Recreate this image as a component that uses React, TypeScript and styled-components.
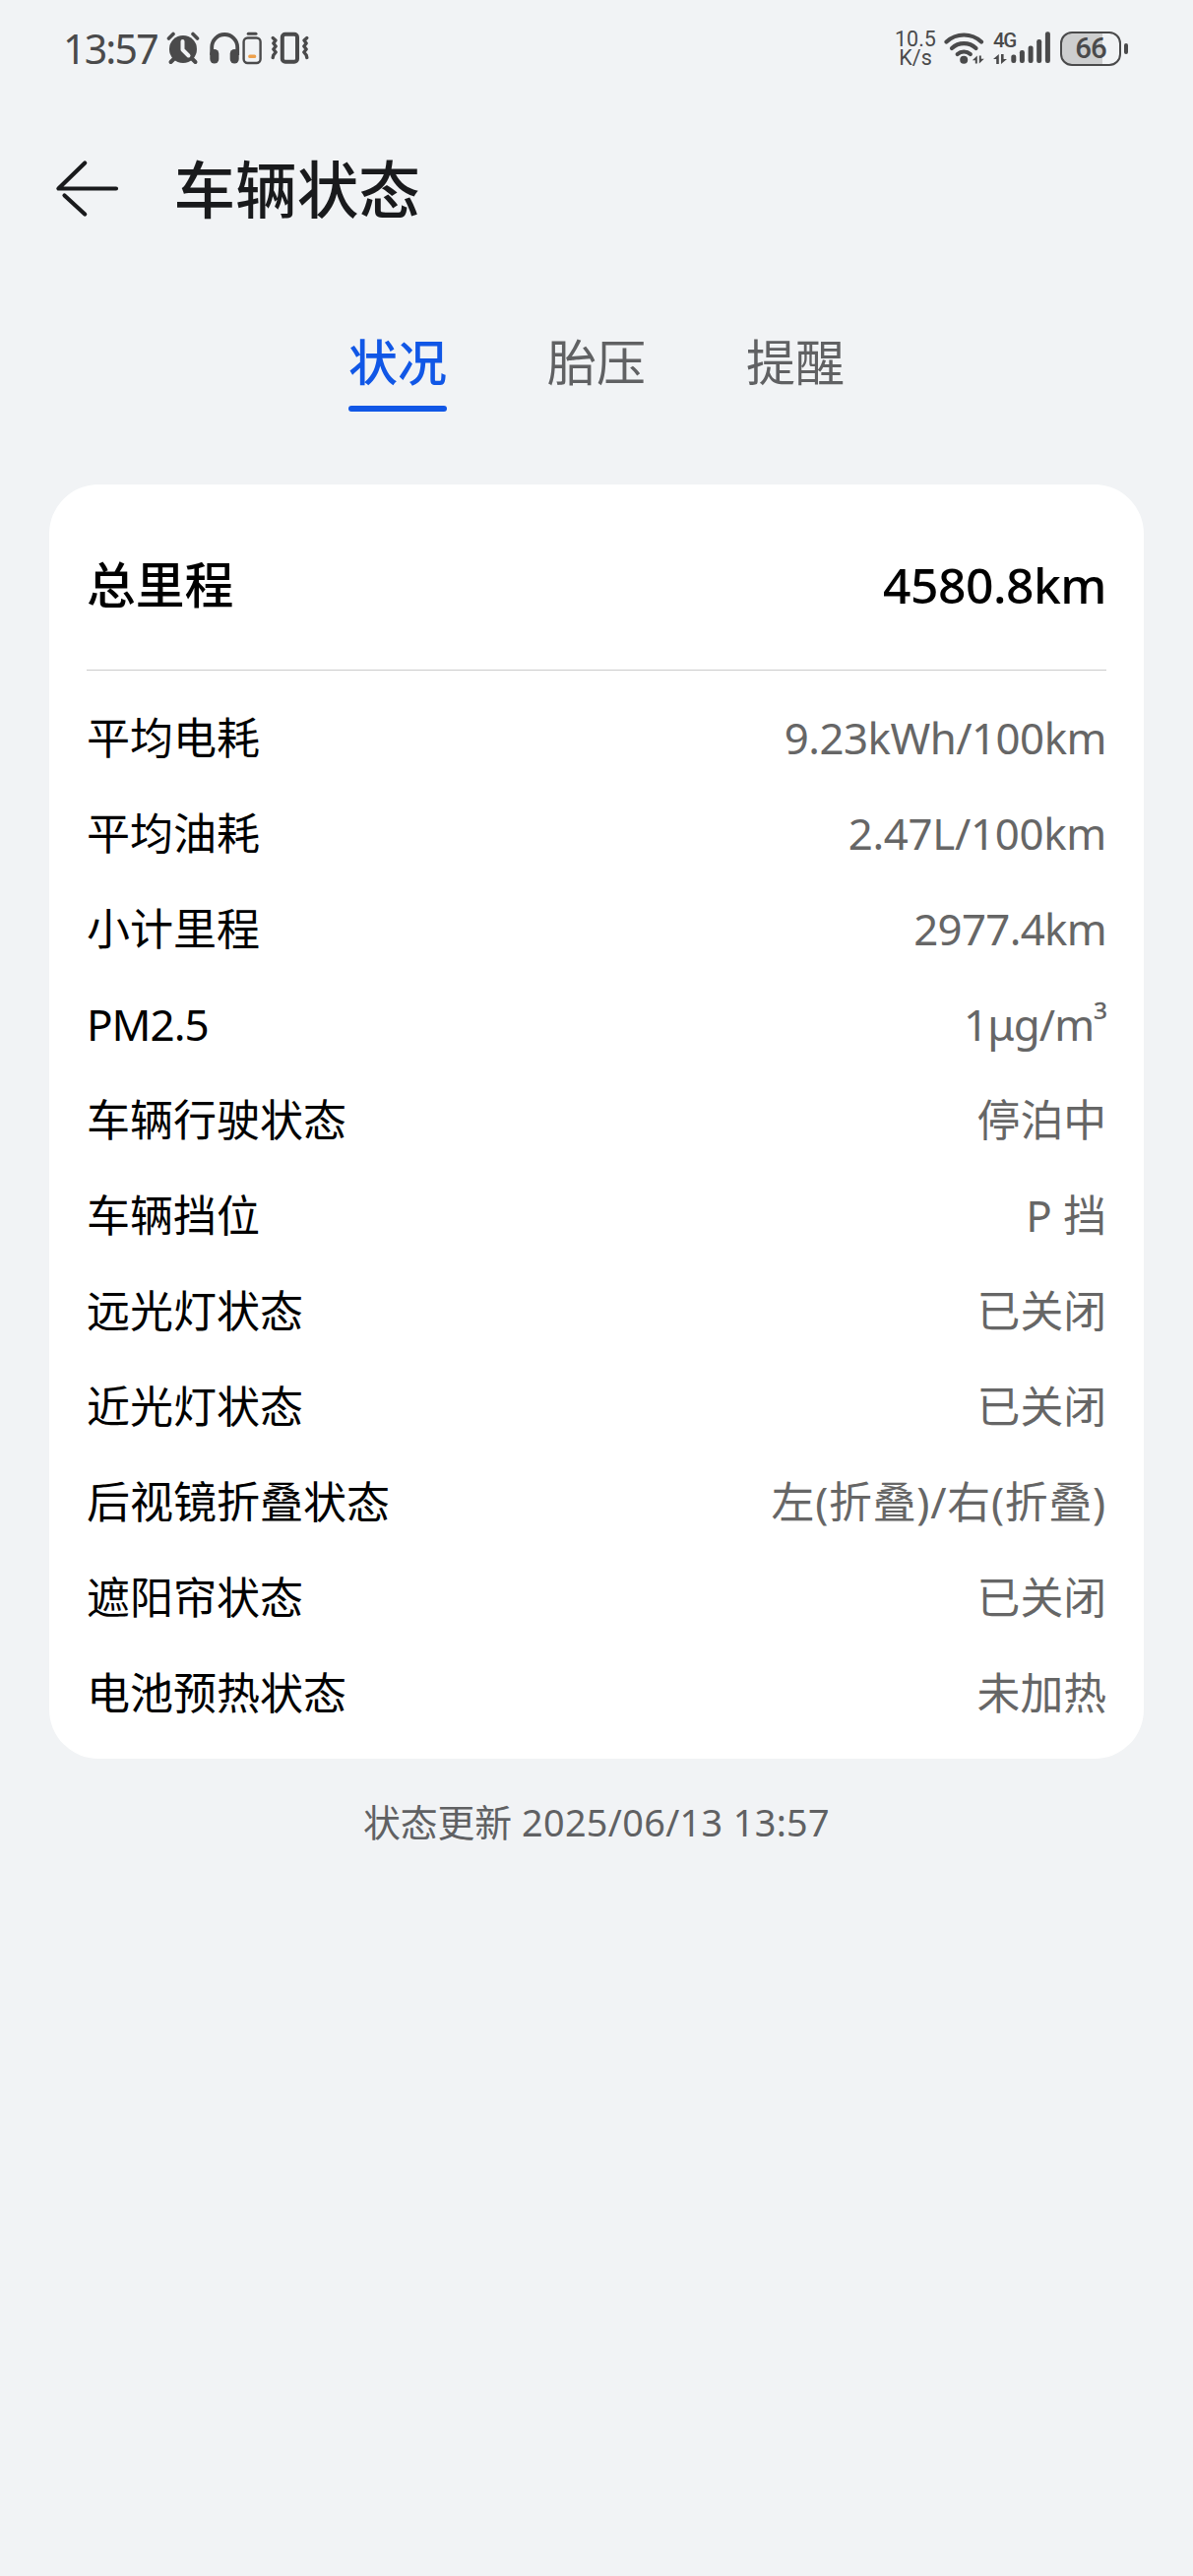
import React from "react";
import styled, { createGlobalStyle } from "styled-components";

const GlobalStyle = createGlobalStyle`
  * { box-sizing: border-box; }
  body {
    margin: 0;
    background: #f1f3f5;
    font-family: "Noto Sans", "Noto Sans CJK SC", sans-serif;
  }
`;

const Screen = styled.main`
  width: 1212px;
  height: 2616px;
  background: #f1f3f5;
  display: flex;
  flex-direction: column;
`;

const StatusBar = styled.header`
  height: 100px;
  padding: 0 66px 0 64px;
  display: flex;
  justify-content: space-between;
  color: #4a4a4b;
`;

const StatusGroup = styled.div`
  display: flex;
  align-items: center;
  height: 98px;
`;

const Clock = styled.span`
  width: 105px;
  font-size: 41px;
  line-height: 98px;
  letter-spacing: -1.8px;
  white-space: nowrap;
`;

const Glyph = styled.svg<{ $gap?: number }>`
  display: block;
  flex: none;
  margin-left: ${(p) => p.$gap ?? 0}px;
`;

const Speed = styled.div`
  display: flex;
  flex-direction: column;
  align-items: center;
  width: 44px;
  font-family: Roboto, sans-serif;
  font-size: 21.5px;
  line-height: 19px;
`;

const Network = styled.div`
  display: flex;
  flex-direction: column;
  width: 24px;
  height: 34px;
  margin-left: 8px;
  justify-content: space-between;
`;

const NetworkType = styled.span`
  font-family: Roboto, sans-serif;
  font-weight: 500;
  font-size: 20.5px;
  line-height: 18px;
  letter-spacing: -1.3px;
`;

const Battery = styled.div`
  width: 62px;
  height: 35px;
  margin-left: 9px;
  border: 2.5px solid #4a4a4b;
  border-radius: 12px;
  background: linear-gradient(to right, #cdcecf 0 70%, #f1f3f5 70%);
  display: flex;
  align-items: center;
  justify-content: center;
  font-family: Roboto, sans-serif;
  font-size: 29.5px;
  font-weight: 500;
  line-height: 30px;
  letter-spacing: -1px;
`;

const BatteryTip = styled.span`
  width: 4px;
  height: 11px;
  margin-left: 3px;
  border-radius: 2px;
  background: #4a4a4b;
`;

const TitleBar = styled.div`
  height: 184px;
  padding-left: 56px;
  display: flex;
  align-items: center;
`;

const BackButton = styled.button`
  width: 120.5px;
  height: 64px;
  padding: 0;
  border: 0;
  background: none;
  display: flex;
  align-items: center;
`;

const Title = styled.h1`
  margin: 0;
  font-size: 62.6px;
  line-height: 90px;
  font-weight: 500;
  color: #191a1c;
`;

const Tabs = styled.nav`
  display: flex;
  justify-content: center;
  gap: 102px;
  height: 208px;
  padding-top: 40px;
`;

const Tab = styled.button<{ $active?: boolean }>`
  height: 98px;
  padding: 4px 0 0;
  border: 0;
  background: none;
  font: inherit;
  font-size: 50px;
  line-height: 80px;
  font-weight: ${(p) => (p.$active ? 500 : 400)};
  color: ${(p) => (p.$active ? "#1157e6" : "#606163")};
  display: flex;
  flex-direction: column;
  justify-content: flex-start;
  white-space: nowrap;

  &::after {
    content: "";
    width: 100px;
    height: 6px;
    margin-top: 4px;
    flex: none;
    border-radius: 3px;
    background: ${(p) => (p.$active ? "#1157e6" : "transparent")};
  }
`;

const Card = styled.section`
  margin: 0 50px;
  height: 1294px;
  padding: 0 38px;
  border-radius: 50px;
  background: #fff;
`;

const TotalRow = styled.div`
  height: 189px;
  padding-top: 15px;
  border-bottom: 1px solid #cccccc;
  display: flex;
  align-items: center;
  justify-content: space-between;
  font-size: 49.8px;
  line-height: 72px;
  font-weight: 500;
  color: #000;
`;

const TotalValue = styled.span`
  letter-spacing: -0.5px;
`;

const Rows = styled.dl`
  margin: 0;
  padding-top: 19px;
`;

const Row = styled.div`
  height: 97px;
  display: flex;
  align-items: center;
  justify-content: space-between;
`;

const Label = styled.dt<{ $track?: number }>`
  font-size: 44px;
  line-height: 64px;
  letter-spacing: ${(p) => p.$track ?? 0}px;
  color: #000;
`;

const Value = styled.dd<{ $track?: number }>`
  margin: 0;
  font-size: 43.8px;
  line-height: 64px;
  letter-spacing: ${(p) => p.$track ?? 0}px;
  color: #666;
`;

const Exponent = styled.span`
  font-size: 39px;
  line-height: 1;
  vertical-align: 6px;
`;

const Updated = styled.p`
  margin: 0;
  padding-top: 37px;
  text-align: center;
  font-size: 37.8px;
  line-height: 56px;
  color: #606163;
`;

const Stamp = styled.span`
  letter-spacing: 0.35px;
`;

const ink = "#4a4a4b";

const AlarmIcon = () => (
  <Glyph width="34" height="34" viewBox="0 0 34 34">
    <circle cx="17" cy="18" r="14" fill={ink} />
    <path d="M2.500 7 7 2.500M31.500 7 27 2.500" stroke={ink} strokeWidth="3.600" strokeLinecap="round" />
    <path d="M7.500 28 4.500 31M26.500 28l3 3" stroke={ink} strokeWidth="4" strokeLinecap="round" />
    <path d="M16.500 10v8.500l6 6" fill="none" stroke="#f1f3f5" strokeWidth="4" strokeLinecap="round" strokeLinejoin="round" />
  </Glyph>
);

const HeadphonesIcon = () => (
  <Glyph $gap={10} width="31" height="34" viewBox="0 0 31 34">
    <path d="M2.200 24v-8a13 13 0 0 1 26 0v8" fill="none" stroke={ink} strokeWidth="3.800" />
    <rect x="0.300" y="18" width="9" height="14.500" rx="4.500" fill={ink} />
    <rect x="20.700" y="18" width="9" height="14.500" rx="4.500" fill={ink} />
  </Glyph>
);

const DeviceBatteryIcon = () => (
  <Glyph $gap={2} width="20" height="34" viewBox="0 0 20 34">
    <rect x="4.700" y="0.800" width="10.800" height="3" rx="1.500" fill={ink} />
    <rect x="1.600" y="6.500" width="17" height="25.500" rx="4" fill="none" stroke={ink} strokeWidth="2.400" />
    <rect x="6.200" y="23.500" width="8" height="3.600" rx="1.600" fill="#eda04c" />
  </Glyph>
);

const VibrateIcon = () => (
  <Glyph $gap={9} width="39" height="34" viewBox="0 0 39 34">
    <rect x="11.800" y="2.800" width="15.200" height="28" rx="3" fill="none" stroke={ink} strokeWidth="4" />
    <path d="M2.200 6.500 5 9 2.800 12 5.200 15 2.800 18 5.200 21 2.800 24 2.200 26.500" fill="none" stroke={ink} strokeWidth="3.300" strokeLinecap="round" strokeLinejoin="round" />
    <path d="M36.800 6.500 34 9 36.200 12 33.800 15 36.200 18 33.800 21 36.200 24 36.800 26.500" fill="none" stroke={ink} strokeWidth="3.300" strokeLinecap="round" strokeLinejoin="round" />
  </Glyph>
);

const WifiIcon = () => (
  <Glyph $gap={7} width="42" height="34" viewBox="0 0 42 34">
    <g fill="none" stroke={ink} strokeWidth="4.200" strokeLinecap="round">
      <path d="M2.500 10.500a26 26 0 0 1 35.500 0" />
      <path d="M8 17a18 18 0 0 1 24.500 0" />
      <path d="M13.700 23a9.800 9.800 0 0 1 13.100 0" />
    </g>
    <circle cx="20.200" cy="28.700" r="4" fill={ink} />
    <path d="M33.800 24.500v8h-2v-3.200h-3zM35.800 32.500v-8h2v3.200h3z" fill={ink} />
  </Glyph>
);

const DataIcon = () => (
  <Glyph width="15" height="12" viewBox="0 0 15 12">
    <path d="M5.800 1v10H3.200V6H0zM8 11V1h2.600v5h3.400z" fill={ink} />
  </Glyph>
);

const SignalIcon = () => (
  <Glyph $gap={-6} width="41" height="34" viewBox="0 0 41 34">
    <g fill={ink}>
      <rect x="0.300" y="23.500" width="5" height="8.500" rx="2.200" />
      <rect x="8.900" y="19" width="5" height="13" rx="2.200" />
      <rect x="17.600" y="14.500" width="5" height="17.500" rx="2.200" />
      <rect x="26.200" y="8" width="5" height="24" rx="2.200" />
      <rect x="34.900" y="0.300" width="5" height="31.700" rx="2.200" />
    </g>
  </Glyph>
);

const BackIcon = () => (
  <Glyph width="66" height="60" viewBox="0 0 66 60" fill="none" stroke="#191a1c" strokeWidth="4.200" strokeLinecap="round">
    <path d="M30.200 3.500 3.400 29.500H62" strokeLinejoin="round" />
    <path d="M9.500 36.500 30.200 55.500" />
  </Glyph>
);

const tabs = ["状况", "胎压", "提醒"];

type RowData = {
  label: string;
  value: React.ReactNode;
  track?: number;
  labelTrack?: number;
};

const rows: RowData[] = [
  { label: "平均电耗", value: "9.23kWh/100km", track: -0.5 },
  { label: "平均油耗", value: "2.47L/100km", track: -0.3 },
  { label: "小计里程", value: "2977.4km", track: -0.7 },
  { label: "PM2.5", value: <>1μg/m<Exponent>³</Exponent></>, track: -0.9, labelTrack: -1 },
  { label: "车辆行驶状态", value: "停泊中" },
  { label: "车辆挡位", value: "P 挡" },
  { label: "远光灯状态", value: "已关闭" },
  { label: "近光灯状态", value: "已关闭" },
  { label: "后视镜折叠状态", value: "左(折叠)/右(折叠)", track: 0.8 },
  { label: "遮阳帘状态", value: "已关闭" },
  { label: "电池预热状态", value: "未加热" },
];

export default function App() {
  return (
    <>
      <GlobalStyle />
      <Screen>
        <StatusBar>
          <StatusGroup>
            <Clock>13:57</Clock>
            <AlarmIcon />
            <HeadphonesIcon />
            <DeviceBatteryIcon />
            <VibrateIcon />
          </StatusGroup>
          <StatusGroup>
            <Speed>
              <span>10.5</span>
              <span>K/s</span>
            </Speed>
            <WifiIcon />
            <Network>
              <NetworkType>4G</NetworkType>
              <DataIcon />
            </Network>
            <SignalIcon />
            <Battery>66</Battery>
            <BatteryTip />
          </StatusGroup>
        </StatusBar>
        <TitleBar>
          <BackButton aria-label="返回">
            <BackIcon />
          </BackButton>
          <Title>车辆状态</Title>
        </TitleBar>
        <Tabs>
          {tabs.map((name, i) => (
            <Tab key={name} $active={i === 0}>
              {name}
            </Tab>
          ))}
        </Tabs>
        <Card>
          <TotalRow>
            <span>总里程</span>
            <TotalValue>4580.8km</TotalValue>
          </TotalRow>
          <Rows>
            {rows.map((r) => (
              <Row key={r.label}>
                <Label $track={r.labelTrack}>{r.label}</Label>
                <Value $track={r.track}>{r.value}</Value>
              </Row>
            ))}
          </Rows>
        </Card>
        <Updated>
          状态更新 <Stamp>2025/06/13 13:57</Stamp>
        </Updated>
      </Screen>
    </>
  );
}
